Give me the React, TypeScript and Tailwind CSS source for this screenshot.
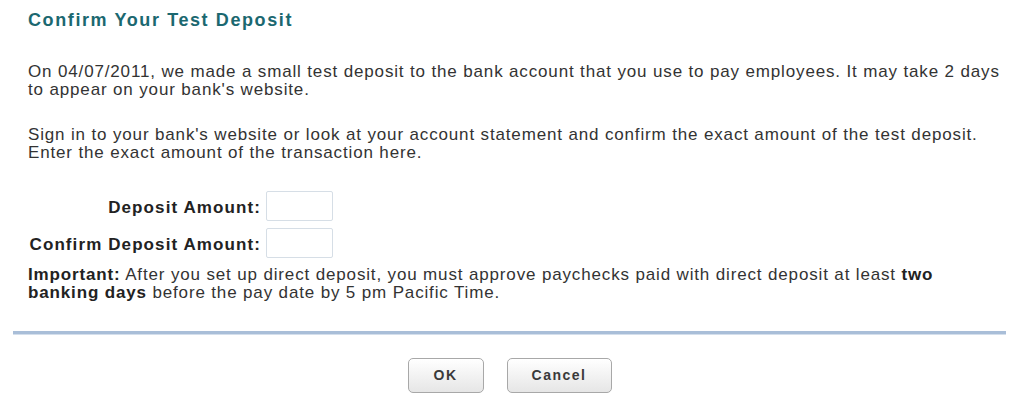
const body = "font-['Liberation_Sans',Arial,sans-serif]";

const FormRow = ({ label }: { label: string }) => (
	<div className="flex items-center gap-[5px]">
		<label className="w-[233px] shrink-0 whitespace-nowrap pt-[3px] text-right text-[17px] leading-[18px] font-bold tracking-[1.1px] text-[#222]">
			{label}
		</label>
		<input
			type="text"
			className="h-[30px] w-[67px] rounded-[2px] border border-[#d6dee6] bg-white px-1 outline-none"
		/>
	</div>
);

const DialogButton = ({ children, width }: { children: string; width: string }) => (
	<button
		type="button"
		className={`${width} h-[35px] rounded-[5px] border border-[#a8a8a8] bg-gradient-to-b from-white to-[#e6e6e6] text-[14px] font-bold tracking-[1.5px] text-[#3a3a3a] shadow-[inset_0_1px_0_#fff]`}
	>
		{children}
	</button>
);

export default function App() {
	return (
		<div className={`${body} h-[410px] w-[1024px] bg-white text-[#333]`}>
			<div className="ml-[13px] w-[993px]">
				<div className="w-[989px] pl-[15px]">
					<h1 className="pt-[9px] text-[18px] leading-[22px] font-bold tracking-[1.6px] text-[#1b6870]">
						Confirm Your Test Deposit
					</h1>

					<p className="mt-[32px] text-[17px] leading-[18px] tracking-[0.85px]">
						On 04/07/2011, we made a small test deposit to the bank account that you use
						to pay employees. It may take 2 days to appear on your bank's website.
					</p>

					<p className="mt-[27px] text-[17px] leading-[18px] tracking-[0.85px]">
						Sign in to your bank's website or look at your account statement and confirm
						the exact amount of the test deposit. Enter the exact amount of the
						transaction here.
					</p>

					<div className="mt-[29px] flex flex-col gap-[7px]">
						<FormRow label="Deposit Amount:" />
						<FormRow label="Confirm Deposit Amount:" />
					</div>

					<p className="mt-[8px] text-[17px] leading-[18px] tracking-[0.85px]">
						<span className="font-bold text-[#222]">Important:</span> After you set up
						direct deposit, you must approve paychecks paid with direct deposit at least{" "}
						<span className="font-bold text-[#222]">two banking days</span> before the pay
						date by 5 pm Pacific Time.
					</p>
				</div>

				<div className="mt-[29px] h-[3px] bg-[#a9bed8] shadow-[0_1px_0_#d4dfec]" />

				<div className="mt-[24px] flex justify-center gap-[23px]">
					<DialogButton width="w-[76px]">OK</DialogButton>
					<DialogButton width="w-[105px]">Cancel</DialogButton>
				</div>
			</div>
		</div>
	);
}
